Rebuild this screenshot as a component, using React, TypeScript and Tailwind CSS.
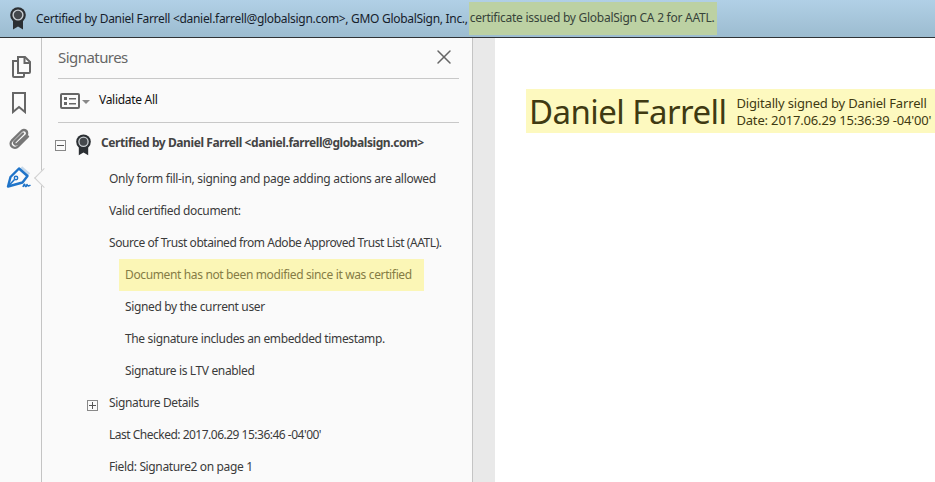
import { X } from "lucide-react";

function Ribbon({ className }: { className: string }) {
	return (
		<svg viewBox="0 0 16 23" className={className}>
			<path d="M3 11 L3 22.5 L8 19.5 L13 22.5 L13 11 Z" fill="#2b2f33" />
			<circle cx="8" cy="8" r="7.8" fill="#2b2f33" />
			<circle cx="8" cy="8" r="5.6" fill="#c9ced2" />
			<circle cx="8" cy="8" r="4.2" fill="#44484c" />
		</svg>
	);
}

function RailIcons() {
	return (
		<div className="flex flex-col items-center w-[42px] shrink-0 pt-[18px] bg-[#fafafa] border-r border-[#c4c4c4] h-full relative">
			<svg viewBox="0 0 20 22" className="w-[20px] h-[22px]" fill="none" stroke="#666" strokeWidth="2">
				<path d="M7 5 H2 V20 a1 1 0 0 0 1 1 H12 a1 1 0 0 0 1 -1 V17" />
				<path d="M7 1 H14 L19 6 V16 a1 1 0 0 1 -1 1 H7 Z" fill="#fafafa" />
				<path d="M13.5 1 V7 H19" />
			</svg>
			<svg viewBox="0 0 14 22" className="w-[14px] h-[22px] mt-[14px] ml-[-3px]" fill="none" stroke="#666" strokeWidth="2">
				<path d="M1 1 H13 V20 L7 15 L1 20 Z" />
			</svg>
			<svg viewBox="0 0 22 22" className="w-[22px] h-[22px] mt-[14px] ml-[-3px]" fill="none" stroke="#777" strokeWidth="2.4" strokeLinecap="round">
				<path d="M20 8.5 L10 18.5 a4.2 4.2 0 0 1 -6.2 -5.8 L13.5 3 a3.2 3.2 0 0 1 4.8 4.3 L9 16 a1.6 1.6 0 0 1 -2.3 -2.3 L15 5.5" />
			</svg>
			<svg viewBox="0 0 26 24" className="w-[26px] h-[24px] mt-[15px] ml-[-4px]" fill="none" stroke="#1f74c9" strokeWidth="2.4" strokeLinejoin="round">
				<path d="M15 2.5 L23 9.5" stroke="#c7d9ea" strokeWidth="3.5" />
				<path d="M2 21.5 L4.5 12 L13 3.5 L21.5 11 L16.5 17.5 Z" />
				<path d="M2.5 21 L8.5 14.5" strokeWidth="1.6" />
				<circle cx="10" cy="13" r="1.7" strokeWidth="1.4" />
				<path d="M17 22 q1.5 -4.5 2 -1.5 q1 2.5 2 -1 q1 2.5 3.5 0.5" strokeWidth="1.6" />
			</svg>
			{/* Active panel notch */}
			<div className="absolute left-[37px] top-[133px] w-[14px] h-[14px] rotate-45 bg-[#fafafa] border-l border-b border-[#d0d0d0]" />
		</div>
	);
}

function TreeBox({ open }: { open: boolean }) {
	return (
		<span className="relative block w-[11px] h-[11px] border border-[#888] shrink-0">
			<span className="absolute left-[1px] right-[1px] top-[4px] h-[1px] bg-[#555]" />
			{!open && <span className="absolute top-[1px] bottom-[1px] left-[4px] w-[1px] bg-[#555]" />}
		</span>
	);
}

function Row({ text, indent }: { text: string; indent: string }) {
	return <div className={`h-[32px] flex items-center text-[#3b3b3b] ${indent}`}>{text}</div>;
}

export default function App() {
	return (
		<div
			className="w-[935px] h-[482px] overflow-hidden flex flex-col bg-white text-[12px]"
			style={{ fontFamily: '"Noto Sans", "Open Sans", sans-serif' }}
		>
			{/* Certification bar */}
			<header className="h-[38px] shrink-0 flex items-center border-b border-[#2f3336] bg-gradient-to-b from-[#b1d0e6] to-[#9cbcd0] text-[#16212b]">
				<Ribbon className="w-[16px] h-[23px] ml-[10px] mr-[10px]" />
				<span className="whitespace-nowrap tracking-[-0.3px]">
					Certified by Daniel Farrell &lt;daniel.farrell@globalsign.com&gt;, GMO GlobalSign, Inc.,
				</span>
				<span className="ml-[1px] h-[33px] mb-[1px] flex items-center px-[1px] w-[248px] bg-[#bcd1a3] text-[#37433a] whitespace-nowrap tracking-[-0.26px]">
					certificate issued by GlobalSign CA 2 for AATL.
				</span>
			</header>

			<div className="flex flex-1 min-h-0">
				<RailIcons />

				{/* Signatures panel */}
				<aside className="w-[431px] shrink-0 bg-[#fafafa] border-r border-[#c4c4c4] pl-[16px] pr-[13px] overflow-hidden tracking-[-0.36px]">
					<div className="h-[41px] flex items-center justify-between border-b border-[#c8c8c8]">
						<span className="text-[15px] text-[#666] tracking-[-0.55px] -mt-[2px]">Signatures</span>
						<X className="w-[24px] h-[24px] text-[#666] mr-[3px] -mt-[2px]" strokeWidth={1.5} />
					</div>
					<div className="h-[44px] flex items-center border-b border-[#c8c8c8]">
						<svg viewBox="0 0 20 16" className="w-[20px] h-[16px] ml-[2px]" fill="none">
							<rect x="1" y="1" width="18" height="14" rx="1" stroke="#666" strokeWidth="2" />
							<rect x="4" y="4" width="3" height="3" fill="#666" />
							<rect x="4" y="9" width="3" height="3" fill="#666" />
							<rect x="9" y="5" width="7" height="1.5" fill="#666" />
							<rect x="9" y="10" width="7" height="1.5" fill="#666" />
						</svg>
						<span className="ml-[2px] mt-[2px] w-0 h-0 border-x-[4px] border-x-transparent border-t-[4px] border-t-[#888]" />
						<span className="ml-[9px] -mt-[2px] text-[#111] tracking-[-0.3px]">Validate All</span>
					</div>
					<div className="-ml-[3px]">
						<div className="h-[40px] flex items-center">
							<span className="mt-[4px]"><TreeBox open /></span>
							<Ribbon className="w-[15px] h-[22px] ml-[10px] mt-[3px]" />
							<span className="ml-[10px] font-bold text-[#444] whitespace-nowrap tracking-[-0.42px]">
								Certified by Daniel Farrell &lt;daniel.farrell@globalsign.com&gt;
							</span>
						</div>
						<div>
							<div className="tracking-[-0.3px]">
								<Row indent="pl-[54px]" text="Only form fill-in, signing and page adding actions are allowed" />
							</div>
							<Row indent="pl-[54px]" text="Valid certified document:" />
							<div className="tracking-[-0.45px]">
								<Row indent="pl-[54px]" text="Source of Trust obtained from Adobe Approved Trust List (AATL)." />
							</div>
							<div className="ml-[64px] w-[305px] h-[32px] pl-[6px] flex items-center bg-[#fbf6b6] text-[#857c45]">
								Document has not been modified since it was certified
							</div>
							<Row indent="pl-[70px]" text="Signed by the current user" />
							<Row indent="pl-[70px]" text="The signature includes an embedded timestamp." />
							<Row indent="pl-[70px]" text="Signature is LTV enabled" />
							<div className="h-[32px] flex items-center pl-[32px] text-[#3b3b3b]">
								<span className="mt-[4px]"><TreeBox open={false} /></span>
								<span className="ml-[11px]">Signature Details</span>
							</div>
							<div className="tracking-[-0.5px]">
								<Row indent="pl-[54px]" text="Last Checked: 2017.06.29 15:36:46 -04'00'" />
							</div>
							<Row indent="pl-[54px]" text="Field: Signature2 on page 1" />
						</div>
					</div>
				</aside>

				{/* Document page */}
				<div className="w-[22px] shrink-0 bg-[#e9e9e9]" />
				<main className="flex-1 bg-white pt-[51px] pl-[31px] overflow-hidden">
					<div className="h-[44px] w-[409px] pl-[3px] flex items-center bg-[#fdf9bf] text-[#3f3a12] whitespace-nowrap">
						<span className="text-[33px] leading-[40px] mt-[1px] tracking-[-0.55px]">Daniel Farrell</span>
						<div className="ml-[10px] mt-[2px] text-[13px] leading-[17px] tracking-[-0.16px]">
							<div>Digitally signed by Daniel Farrell</div>
							<div>Date: 2017.06.29 15:36:39 -04'00'</div>
						</div>
					</div>
				</main>
			</div>
		</div>
	);
}
